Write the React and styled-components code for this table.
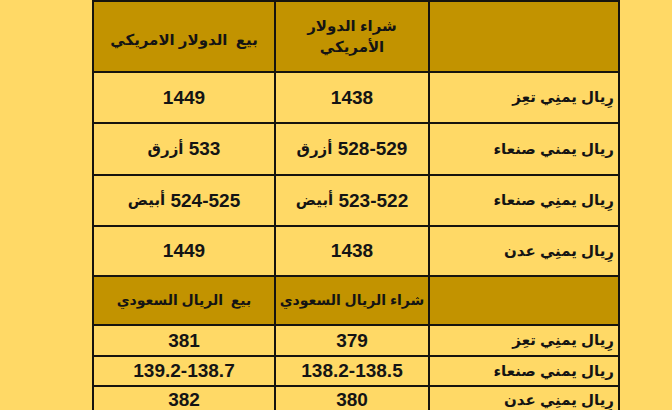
import React from 'react';
import styled, { createGlobalStyle } from 'styled-components';

const Global = createGlobalStyle`
  html, body {
    margin: 0;
    padding: 0;
    background: #ffd966;
    overflow: hidden;
  }
  body {
    font-family: "Liberation Sans", "DejaVu Sans", Arial, sans-serif;
    color: #141414;
  }
`;

const Page = styled.div`
  width: 672px;
  height: 410px;
  background: #ffd966;
  padding-left: 92px;
  box-sizing: border-box;
`;

const Grid = styled.div`
  direction: rtl;
  display: grid;
  width: 528px;
  grid-template-columns: 188px 152px 180px;
  grid-template-rows: 69px 49px 50px 49px 48px 47px 29px 28px 26px;
  gap: 2px;
  padding: 2px;
  box-sizing: border-box;
  background: #16140e;
`;

const Cell = styled.div`
  background: ${p => (p.$head ? '#c29300' : '#ffd966')};
  display: flex;
  align-items: center;
  justify-content: ${p => (p.$label ? 'flex-start' : 'center')};
  padding: ${p => (p.$label ? '0 4px 0 0' : '0')};
  text-align: center;
  font-weight: bold;
  font-size: ${p => (p.$small ? '14px' : p.$label || p.$head ? '15px' : '19px')};
  line-height: 1.35;
  white-space: nowrap;
  overflow: hidden;
  padding-top: ${p => (p.$low ? '8px' : '0')};
  box-sizing: border-box;
`;

const Word = styled.span`
  font-size: 15px;
`;

const rowsUsd = [
  ['رِيال يمنِي تعِز', '1438', '1449'],
  ['ريال يمني صنعاء', ['528-529', 'أزرق'], ['533', 'أزرق']],
  ['رِيال يمنِي صنعاء', ['523-522', 'أبيض'], ['524-525', 'أبيض']],
  ['رِيال يمنِي عدن', '1438', '1449'],
];

const rowsSar = [
  ['رِيال يمنِي تعِز', '379', '381'],
  ['ريال يمني صنعاء', '138.2-138.5', '139.2-138.7'],
  ['رِيال يمنِي عدن', '380', '382'],
];

function Value({ v }) {
  if (Array.isArray(v)) {
    return (
      <Cell>
        {v[0]}&nbsp;<Word>{v[1]}</Word>
      </Cell>
    );
  }
  return <Cell>{v}</Cell>;
}

export default function App() {
  return (
    <>
      <Global />
      <Page>
        <Grid>
          <Cell $head />
          <Cell $head>
            شراء الدولار
            <br />
            الأمريكي
          </Cell>
          <Cell $head $low>بيع&nbsp; الدولار الامريكي</Cell>
          {rowsUsd.map((r, i) => (
            <React.Fragment key={'u' + i}>
              <Cell $label>{r[0]}</Cell>
              <Value v={r[1]} />
              <Value v={r[2]} />
            </React.Fragment>
          ))}
          <Cell $head />
          <Cell $head $small>شراء الريال السعودي</Cell>
          <Cell $head $small>بيع&nbsp; الريال السعودي</Cell>
          {rowsSar.map((r, i) => (
            <React.Fragment key={'s' + i}>
              <Cell $label>{r[0]}</Cell>
              <Value v={r[1]} />
              <Value v={r[2]} />
            </React.Fragment>
          ))}
        </Grid>
      </Page>
    </>
  );
}
